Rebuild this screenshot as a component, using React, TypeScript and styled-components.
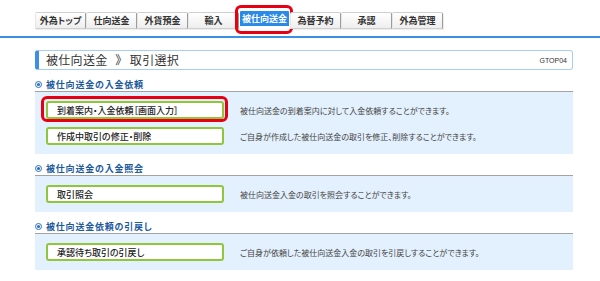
import styled, { createGlobalStyle, css } from "styled-components";

const GlobalStyle = createGlobalStyle`
  html, body {
    margin: 0;
    padding: 0;
    background: #ffffff;
  }
  body {
    font-family: "Noto Sans CJK JP", "Noto Sans", sans-serif;
    font-feature-settings: "palt";
    color: #333333;
  }
`;

const marked = css`
  &::after {
    content: "";
    position: absolute;
    border: 3px solid #e60012;
    border-radius: 6px;
    pointer-events: none;
  }
`;

const Page = styled.div`
  width: 600px;
  height: 281px;
  overflow: hidden;
`;

const TabBar = styled.nav`
  display: flex;
  align-items: flex-start;
  height: 24px;
  padding: 12px 0 0 35px;
  border-bottom: 2px solid #3b8fe4;
`;

const Tab = styled.div<{ $active?: boolean }>`
  position: relative;
  width: 51px;
  height: 17px;
  box-sizing: border-box;
  display: flex;
  align-items: center;
  justify-content: center;
  font-size: 9px;
  font-weight: 700;
  color: #333333;
  background: linear-gradient(#ffffff, #eeeeee);
  border: 1px solid #cfcfcf;
  border-left-color: #e6e6e6;
  border-right-color: #9c9c9c;
  border-radius: 2px 2px 0 0;
  box-shadow: 1px 1px 1px rgba(0, 0, 0, 0.08);

  ${(p) =>
    p.$active &&
    css`
      margin-top: -2px;
      background: #2a8ae8;
      color: #ffffff;
      border: 1px solid #ffffff;
      box-shadow: none;
      ${marked}
      &::after {
        top: -6px;
        bottom: -8px;
        left: -5px;
        right: -4px;
      }
    `}
`;

const TitleBox = styled.div`
  margin: 12px 27px 0 35px;
  height: 20px;
  box-sizing: border-box;
  border: 1px solid #a9cdf0;
  border-left: 4px solid #3b8fe4;
  border-radius: 3px;
  display: flex;
  align-items: center;
  justify-content: space-between;
  padding: 0 5px 0 7px;
`;

const TitleText = styled.h1`
  margin: 0;
  font-size: 12px;
  font-weight: 400;
  color: #333333;
  letter-spacing: 0.3px;
  line-height: 1;
`;

const Chevron = styled.span`
  margin: 0 8px;
`;

const ScreenId = styled.span`
  font-family: "Liberation Sans", sans-serif;
  font-size: 7px;
  color: #333333;
`;

const Content = styled.main`
  margin: 0 27px 0 35px;
`;

const SectionHeader = styled.h2`
  margin: 7px 0 0;
  height: 14px;
  display: flex;
  align-items: center;
  gap: 4px;
  border-bottom: 1px solid #a3a3a3;
  font-size: 9px;
  font-weight: 700;
  letter-spacing: 0.8px;
  color: #1c5a9e;
`;

const Panel = styled.div`
  background: #e3f0fd;
  padding: 9px 0 9px 11px;
  display: flex;
  flex-direction: column;
  gap: 8px;
`;

const Row = styled.div`
  display: flex;
  align-items: center;
  gap: 16px;
`;

const MenuButton = styled.button<{ $marked?: boolean }>`
  position: relative;
  width: 178px;
  height: 18px;
  box-sizing: border-box;
  border: 2px solid #8fc63a;
  border-radius: 3px;
  background: #ffffff;
  padding: 0 0 0 9px;
  display: flex;
  align-items: center;
  font-family: inherit;
  font-feature-settings: "palt";
  font-size: 9px;
  font-weight: 500;
  color: #222222;
  cursor: pointer;

  ${(p) =>
    p.$marked &&
    css`
      ${marked}
      &::after {
        top: -7px;
        bottom: -5px;
        left: -7px;
        right: -6px;
      }
    `}
`;

const Description = styled.p`
  margin: 0;
  font-size: 8px;
  color: #444444;
`;

const Bullet = () => (
  <svg width="7" height="7" viewBox="0 0 7 7">
    <circle cx="3.5" cy="3.5" r="3" fill="#ffffff" stroke="#2a6fc0" strokeWidth="1" />
    <circle cx="3.5" cy="3.5" r="1.6" fill="#2a6fc0" />
  </svg>
);

const tabs = ["外為トップ", "仕向送金", "外貨預金", "輸入", "被仕向送金", "為替予約", "承認", "外為管理"];

const sections = [
  {
    title: "被仕向送金の入金依頼",
    items: [
      { label: "到着案内・入金依頼［画面入力］", text: "被仕向送金の到着案内に対して入金依頼することができます。", marked: true },
      { label: "作成中取引の修正・削除", text: "ご自身が作成した被仕向送金の取引を修正、削除することができます。" },
    ],
  },
  {
    title: "被仕向送金の入金照会",
    items: [{ label: "取引照会", text: "被仕向送金入金の取引を照会することができます。" }],
  },
  {
    title: "被仕向送金依頼の引戻し",
    items: [{ label: "承認待ち取引の引戻し", text: "ご自身が依頼した被仕向送金入金の取引を引戻しすることができます。" }],
  },
];

export default function App() {
  return (
    <Page>
      <GlobalStyle />
      <TabBar>
        {tabs.map((t) => (
          <Tab key={t} $active={t === "被仕向送金"}>
            {t}
          </Tab>
        ))}
      </TabBar>
      <TitleBox>
        <TitleText>
          被仕向送金<Chevron>》</Chevron>取引選択
        </TitleText>
        <ScreenId>GTOP04</ScreenId>
      </TitleBox>
      <Content>
        {sections.map((s) => (
          <section key={s.title}>
            <SectionHeader>
              <Bullet />
              {s.title}
            </SectionHeader>
            <Panel>
              {s.items.map((it) => (
                <Row key={it.label}>
                  <MenuButton $marked={it.marked}>{it.label}</MenuButton>
                  <Description>{it.text}</Description>
                </Row>
              ))}
            </Panel>
          </section>
        ))}
      </Content>
    </Page>
  );
}
